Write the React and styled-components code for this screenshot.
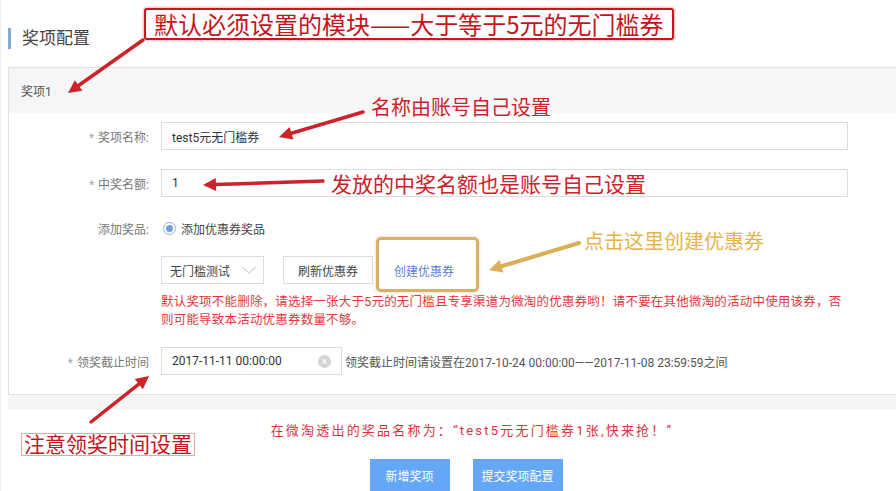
import React from "react";
import styled, { createGlobalStyle } from "styled-components";

const GlobalStyle = createGlobalStyle`
  html, body {
    margin: 0;
    padding: 0;
    background: #fff;
  }
  body {
    font-family: Roboto, "Noto Sans CJK SC", "Noto Sans", sans-serif;
    color: #333;
  }
  * {
    box-sizing: border-box;
  }
`;

const Page = styled.div`
  width: 896px;
  height: 491px;
  overflow: hidden;
  position: relative;
  padding-left: 7px;
  border-left: 1px solid #ececec;
`;

const TitleBar = styled.div`
  height: 67px;
  display: flex;
  align-items: center;
  padding-top: 10px;

  h1 {
    margin: 0;
    padding-left: 11px;
    border-left: 3px solid #86a9d4;
    font-size: 17px;
    line-height: 21px;
    font-weight: 400;
    color: #444;
  }
`;

const Card = styled.div`
  border: 1px solid #e1e1e4;
  border-right: none;
`;

const CardHead = styled.div`
  height: 45px;
  background: #f6f5f7;
  display: flex;
  align-items: center;
  padding-left: 12px;
  font-size: 12px;
  color: #555;
`;

const CardBody = styled.div`
  padding: 9px 0 19px;
  background: #fff;
`;

const Row = styled.div`
  display: flex;
  align-items: center;
  height: 28px;
  margin-top: ${(p) => p.$gap || 0}px;
`;

const Label = styled.div`
  width: 140px;
  margin-right: 12px;
  text-align: right;
  font-size: 12px;
  color: #777;

  span {
    color: #aaa;
    margin-right: 4px;
  }
`;

const TextInput = styled.div`
  width: ${(p) => p.$w}px;
  height: 28px;
  border: 1px solid #dcdcdf;
  background: #fff;
  display: flex;
  align-items: center;
  justify-content: space-between;
  padding: 0 10px;
  font-size: 12px;
  color: #333;
`;

const Radio = styled.span`
  width: 13px;
  height: 13px;
  border-radius: 50%;
  border: 1px solid #8db1dd;
  display: inline-flex;
  align-items: center;
  justify-content: center;
  margin: 0 5px 0 2px;

  &::after {
    content: "";
    width: 7px;
    height: 7px;
    border-radius: 50%;
    background: #6e9fdc;
  }
`;

const RadioText = styled.span`
  font-size: 12px;
  color: #444;
`;

const Select = styled.div`
  width: 103px;
  height: 28px;
  border: 1px solid #dcdcdf;
  display: flex;
  align-items: center;
  justify-content: space-between;
  padding: 0 6px 0 8px;
  font-size: 12px;
  color: #444;
`;

const Button = styled.div`
  width: 90px;
  height: 28px;
  border: 1px solid #dcdcdf;
  margin-left: 19px;
  display: flex;
  align-items: center;
  justify-content: center;
  font-size: 12px;
  color: #444;
`;

const Link = styled.span`
  margin-left: 21px;
  font-size: 12px;
  color: #5d7fd0;
`;

const Warning = styled.p`
  margin: 9px 0 0 152px;
  font-size: 12.5px;
  line-height: 18px;
  letter-spacing: 0.2px;
  color: #e2393d;
`;

const ClearIcon = styled.span`
  width: 13px;
  height: 13px;
  border-radius: 50%;
  background: #d3d3d6;
  color: #fff;
  font-size: 11px;
  line-height: 13px;
  text-align: center;
`;

const Hint = styled.span`
  margin-left: 3px;
  font-size: 12px;
  color: #555;
`;

const Band = styled.div`
  height: 14px;
  background: #f5f5f7;
  border-bottom: 1px solid #f0f0f2;
`;

const Footer = styled.div`
  padding: 13px 0 0 40px;
  display: flex;
  flex-direction: column;
  align-items: center;
`;

const PrizeText = styled.div`
  font-size: 13px;
  line-height: 18px;
  letter-spacing: 2.2px;
  color: #d9363e;
`;

const Actions = styled.div`
  display: flex;
  gap: 23px;
  margin: 19px 12px 0 0;
`;

const PrimaryButton = styled.div`
  width: ${(p) => p.$w}px;
  height: 32px;
  background: #63a7f6;
  color: #fff;
  font-size: 12px;
  display: flex;
  align-items: center;
  justify-content: center;
`;

/* annotations drawn over the screenshot */
const Note = styled.div`
  position: absolute;
  left: ${(p) => p.$x}px;
  top: ${(p) => p.$y}px;
  font-size: ${(p) => p.$size}px;
  line-height: 1.2;
  color: ${(p) => p.$color || "#cc222a"};
  font-family: "Noto Sans CJK SC", sans-serif;
  white-space: nowrap;
  text-shadow: 0 0 1px rgba(255, 255, 255, 0.9);
`;

const BoxedNote = styled(Note)`
  background: #fff;
  border: ${(p) => p.$border};
  border-radius: ${(p) => p.$radius || 0}px;
  box-shadow: ${(p) => p.$shadow || "none"};
  padding: 0 ${(p) => p.$pad || 4}px;
  height: ${(p) => p.$h}px;
  line-height: ${(p) => p.$h - 4}px;
`;

const Highlight = styled.div`
  position: absolute;
  left: 375px;
  top: 237px;
  width: 103px;
  height: 55px;
  border: 3px solid #d8b068;
  border-radius: 5px;
  box-shadow: 0 0 3px rgba(200, 160, 80, 0.5);
`;

const ArrowLayer = styled.svg`
  position: absolute;
  left: 0;
  top: 0;
  pointer-events: none;
`;

function Arrow({ from, to, color, width = 3.5, head = 13 }) {
  const [x1, y1] = from;
  const [x2, y2] = to;
  const a = Math.atan2(y2 - y1, x2 - x1);
  const bx = x2 - head * Math.cos(a);
  const by = y2 - head * Math.sin(a);
  const hw = head * 0.5;
  const px = -Math.sin(a) * hw;
  const py = Math.cos(a) * hw;
  return (
    <g>
      <line x1={x1} y1={y1} x2={bx} y2={by} stroke={color} strokeWidth={width} strokeLinecap="round" />
      <polygon points={`${x2},${y2} ${bx + px},${by + py} ${bx - px},${by - py}`} fill={color} />
    </g>
  );
}

const Chevron = () => (
  <svg width="16" height="10" viewBox="0 0 16 10">
    <path d="M1 2 L8 8 L15 2" fill="none" stroke="#d6d6da" strokeWidth="1.2" />
  </svg>
);

const App = () => {
  return (
    <>
      <GlobalStyle />
      <Page>
        <TitleBar>
          <h1>奖项配置</h1>
        </TitleBar>

        <Card>
          <CardHead>奖项1</CardHead>
          <CardBody>
            <Row>
              <Label>
                <span>*</span>奖项名称:
              </Label>
              <TextInput $w={687}>test5元无门槛券</TextInput>
            </Row>
            <Row $gap={19}>
              <Label>
                <span>*</span>中奖名额:
              </Label>
              <TextInput $w={687}>1</TextInput>
            </Row>
            <Row $gap={17}>
              <Label>添加奖品:</Label>
              <Radio />
              <RadioText>添加优惠券奖品</RadioText>
            </Row>
            <Row $gap={14}>
              <Label />
              <Select>
                无门槛测试
                <Chevron />
              </Select>
              <Button>刷新优惠券</Button>
              <Link>创建优惠券</Link>
            </Row>
            <Warning>
              默认奖项不能删除，请选择一张大于5元的无门槛且专享渠道为微淘的优惠券哟！请不要在其他微淘的活动中使用该券，否
              <br />
              则可能导致本活动优惠券数量不够。
            </Warning>
            <Row $gap={18}>
              <Label>
                <span>*</span>领奖截止时间
              </Label>
              <TextInput $w={181}>
                2017-11-11 00:00:00
                <ClearIcon>×</ClearIcon>
              </TextInput>
              <Hint>领奖截止时间请设置在2017-10-24 00:00:00——2017-11-08 23:59:59之间</Hint>
            </Row>
          </CardBody>
        </Card>

        <Band />

        <Footer>
          <PrizeText>在微淘透出的奖品名称为：“test5元无门槛券1张,快来抢！”</PrizeText>
          <Actions>
            <PrimaryButton $w={80}>新增奖项</PrimaryButton>
            <PrimaryButton $w={90}>提交奖项配置</PrimaryButton>
          </Actions>
        </Footer>

        <Highlight />

        <ArrowLayer width="896" height="491">
          <Arrow from={[142, 40]} to={[67, 93]} color="#cc222a" />
          <Arrow from={[362, 112]} to={[278, 137]} color="#cc222a" />
          <Arrow from={[322, 181]} to={[202, 185]} color="#cc222a" />
          <Arrow from={[578, 243]} to={[488, 270]} color="#dcae55" width={4} />
          <Arrow from={[90, 422]} to={[148, 376]} color="#cc222a" />
        </ArrowLayer>

        <BoxedNote
          $x={143}
          $y={8}
          $h={32}
          $size={24}
          $pad={8}
          $radius={3}
          $border="2px solid #c8161d"
          $shadow="0 0 3px rgba(200, 20, 30, 0.6)"
          $color="#c4141c"
        >
          默认必须设置的模块——大于等于5元的无门槛券
        </BoxedNote>
        <Note $x={370} $y={95} $size={20}>
          名称由账号自己设置
        </Note>
        <Note $x={330} $y={171} $size={21}>
          发放的中奖名额也是账号自己设置
        </Note>
        <Note $x={583} $y={229} $size={20} $color="#e6b44b">
          点击这里创建优惠券
        </Note>
        <BoxedNote $x={20} $y={433} $h={23} $size={21} $pad={2} $border="1px solid #e9a4a4" $color="#c4141c">
          注意领奖时间设置
        </BoxedNote>
      </Page>
    </>
  );
};

export default App;
